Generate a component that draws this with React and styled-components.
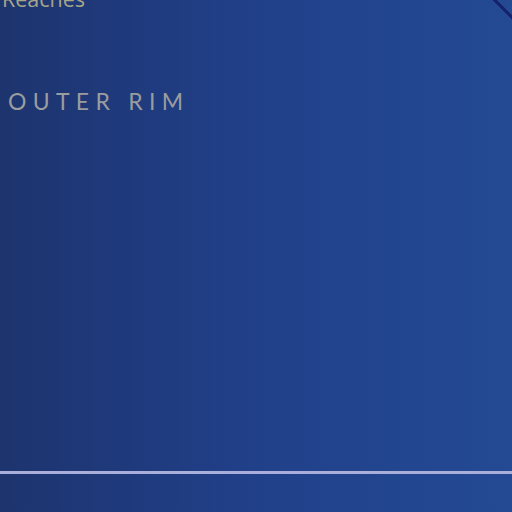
import React from 'react';
import styled, { createGlobalStyle } from 'styled-components';

const GlobalStyle = createGlobalStyle`
  html, body {
    margin: 0;
    padding: 0;
    background: #1e356f;
  }
`;

function App() {
  return (
    <>
      <GlobalStyle />
      <Page>
        <CornerMark />
        <Top>
          <Label>Reaches</Label>
        </Top>
        <Region>OUTER RIM</Region>
        <Spacer />
        <Divider />
        <Footer />
      </Page>
    </>
  );
}

const Page = styled.div`
  position: relative;
  width: 512px;
  height: 512px;
  overflow: hidden;
  display: flex;
  flex-direction: column;
  background: linear-gradient(90deg, #1d346e 0%, #21408a 50%, #234a93 100%);
  font-family: Lato, "Open Sans", sans-serif;
`;

const CornerMark = styled.div`
  position: absolute;
  top: -30px;
  right: -29px;
  width: 40px;
  height: 40px;
  border: 3px solid #15226a;
  border-radius: 8px;
  transform: rotate(45deg);
`;

const Top = styled.div`
  margin-top: -12px;
  padding-left: 2px;
`;

const Label = styled.div`
  font-family: "Open Sans", Lato, sans-serif;
  font-size: 21.5px;
  line-height: 22px;
  color: #a8a689;
`;

const Region = styled.h1`
  margin: 78px 0 0 8px;
  font-size: 23px;
  font-weight: 400;
  line-height: 26px;
  letter-spacing: 6.3px;
  color: #9b9c9e;
`;

const Spacer = styled.div`
  flex: 1;
`;

const Divider = styled.div`
  height: 3px;
  background: #a9aedb;
`;

const Footer = styled.div`
  height: 38px;
`;

export default App;
